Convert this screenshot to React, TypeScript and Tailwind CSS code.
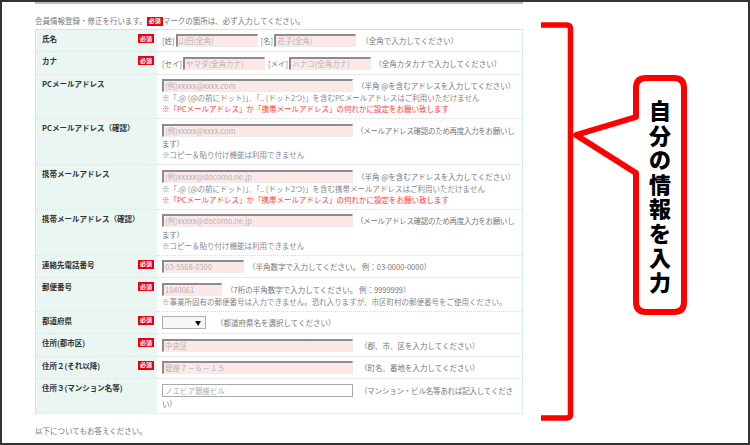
import React from 'react';

const font = "font-['Noto_Sans_CJK_JP','Noto_Sans',sans-serif]";

const Badge = () => (
  <span className="inline-flex h-[9px] w-[16px] items-center justify-center bg-[#e60012] text-[6px] font-bold leading-none text-white">
    必須
  </span>
);

const Field = ({ w, ph }: { w: string; ph: string }) => (
  <span
    className={`inline-block h-[13px] ${w} overflow-hidden whitespace-nowrap border-b border-l-2 border-r border-t-2 border-b-[#ececec] border-l-[#8c8c8c] border-r-[#ececec] border-t-[#8c8c8c] bg-[#fde8e8] pl-[1px] align-middle text-[7.5px] leading-[10px] text-[#b3b3b3]`}
  >
    {ph}
  </span>
);

const Row = ({ label, req, children }: { label: string; req?: boolean; children: React.ReactNode }) => (
  <div className="grid grid-cols-[121px_1fr] border-b border-dotted border-[#bfe7dc]">
    <div className="flex items-start justify-between bg-[#e9f6f2] pl-[6px] pr-[3px] pt-[4px] text-[7.5px] font-bold leading-[10px] text-[#333]">
      <span>{label}</span>
      {req && <Badge />}
    </div>
    <div className="pb-[4px] pl-[5px] pr-[1px] pt-[4px] text-[7.5px] leading-[11px] text-[#777]">{children}</div>
  </div>
);

const Hint = ({ children, cls }: { children: React.ReactNode; cls: string }) => (
  <span className={`${cls} align-middle`}>{children}</span>
);

const Note = ({ children, red }: { children: React.ReactNode; red?: boolean }) => (
  <div className={red ? 'text-[#ff3b3b]' : 'text-[#888]'}>{children}</div>
);

export default function App() {
  return (
    <div className={`relative h-[445px] w-[750px] overflow-hidden border-2 border-[#333] bg-white ${font}`}>
      <div className="flex h-full">
        <div className="ml-[33px] w-[488px]">
          <div className="h-[2px] bg-[#bdbdbd]" />
          <div className="mt-[12px] flex items-center text-[7.5px] leading-[10px] text-[#777]">
            会員情報登録・修正を行います。
            <Badge />
            マークの箇所は、必ず入力してください。
          </div>

          <div className="mt-[3px] border-l border-r border-t border-[#c9ece2] border-r-[#d3efe7]">
            <Row label="氏名" req>
              <span className="mr-[1px] align-middle">[姓]</span>
              <Field w="w-[82px]" ph="山田(全角)" />
              <span className="ml-[3px] mr-[1px] align-middle">[名]</span>
              <Field w="w-[82px]" ph="花子(全角)" />
              <Hint cls="ml-[5px]">（全角で入力してください）</Hint>
            </Row>
            <Row label="カナ" req>
              <span className="mr-[1px] align-middle">[セイ]</span>
              <Field w="w-[82px]" ph="ヤマダ(全角カナ)" />
              <span className="ml-[3px] mr-[1px] align-middle">[メイ]</span>
              <Field w="w-[82px]" ph="ハナコ(全角カナ)" />
              <Hint cls="ml-[3px]">（全角カタカナで入力してください）</Hint>
            </Row>
            <Row label="PCメールアドレス">
              <Field w="w-[191px]" ph="(例)xxxxx@xxxx.com" />
              <Hint cls="ml-[4px]">（半角 @を含むアドレスを入力してください）</Hint>
              <Note>※「.@ (@の前にドット)」、「.. (ドット2つ)」を含むPCメールアドレスはご利用いただけません</Note>
              <Note red>※「PCメールアドレス」か「携帯メールアドレス」の何れかに設定をお願い致します</Note>
            </Row>
            <Row label="PCメールアドレス（確認）">
              <Field w="w-[191px]" ph="(例)xxxxx@xxxx.com" />
              <Hint cls="ml-[3px] tracking-[-0.3px]">
                （メールアドレス確認のため再度入力をお願いし
                <br />
                ます）
              </Hint>
              <Note>※コピー＆貼り付け機能は利用できません</Note>
            </Row>
            <Row label="携帯メールアドレス">
              <Field w="w-[191px]" ph="(例)xxxxx@docomo.ne.jp" />
              <Hint cls="ml-[4px]">（半角 @を含むアドレスを入力してください）</Hint>
              <Note>※「.@ (@の前にドット)」、「.. (ドット2つ)」を含む携帯メールアドレスはご利用いただけません</Note>
              <Note red>※「PCメールアドレス」か「携帯メールアドレス」の何れかに設定をお願い致します</Note>
            </Row>
            <Row label="携帯メールアドレス（確認）">
              <Field w="w-[191px]" ph="(例)xxxxx@docomo.ne.jp" />
              <Hint cls="ml-[3px] tracking-[-0.3px]">
                （メールアドレス確認のため再度入力をお願いし
                <br />
                ます）
              </Hint>
              <Note>※コピー＆貼り付け機能は利用できません</Note>
            </Row>
            <Row label="連絡先電話番号" req>
              <Field w="w-[82px]" ph="03-5568-0300" />
              <Hint cls="ml-[4px]">（半角数字で入力してください。 例：03-0000-0000）</Hint>
            </Row>
            <Row label="郵便番号" req>
              <Field w="w-[60px]" ph="1040061" />
              <Hint cls="ml-[4px]">（7桁の半角数字で入力してください。 例：9999999）</Hint>
              <Note>※事業所固有の郵便番号は入力できません。恐れ入りますが、市区町村の郵便番号をご使用ください。</Note>
            </Row>
            <Row label="都道府県" req>
              <span className="inline-flex h-[13px] w-[44px] items-center justify-end border border-[#b0b0b0] bg-[#f6f6f6] pr-[4px] align-middle text-[6px] text-black">
                ▼
              </span>
              <Hint cls="ml-[10px]">（都道府県名を選択してください）</Hint>
            </Row>
            <Row label="住所(都市区)" req>
              <Field w="w-[191px]" ph="中央区" />
              <Hint cls="ml-[7px]">（郡、市、区を入力してください）</Hint>
            </Row>
            <Row label="住所２(それ以降)" req>
              <Field w="w-[191px]" ph="銀座７－６－１５" />
              <Hint cls="ml-[7px]">（町名、番地を入力してください）</Hint>
            </Row>
            <Row label="住所３(マンション名等)">
              <span className="inline-block h-[13px] w-[191px] border border-[#a8a8a8] bg-white pl-[2px] align-middle text-[7.5px] leading-[11px] text-[#aaa]">
                ノエビア銀座ビル
              </span>
              <Hint cls="ml-[7px] tracking-[-0.2px]">
                （マンション・ビル名等あれば記入してくださ
                <br />
                い）
              </Hint>
            </Row>
          </div>

          <div className="mt-[12px] text-[7.5px] leading-[10px] text-[#777]">以下についてもお答えください。</div>
          <div className="mt-[10px] h-[10px] border-l border-t border-[#c9ece2] bg-[#e9f6f2]" />
        </div>

        <div className="relative flex-1">
          <svg className="absolute inset-0" width="225" height="441" viewBox="0 0 225 441">
            <path
              d="M18 23 H44 Q47.5 23 47.5 27 V412 Q47.5 416 44 416 H18"
              fill="none"
              stroke="#ff0000"
              strokeWidth="5.5"
            />
            <path
              d="M123 76 H151 Q161 76 161 86 V300 Q161 310 151 310 H123 Q113 310 113 300 V171 L53 133 L113 115 V86 Q113 76 123 76 Z"
              fill="#ffffff"
              stroke="#ff0000"
              strokeWidth="6"
              strokeLinejoin="round"
            />
          </svg>
          <div className="absolute left-[125px] top-[95px] flex w-[24px] flex-col items-center text-[22px] font-black leading-[24.5px] text-black">
            {'自分の情報を入力'.split('').map((c, i) => (
              <span key={i}>{c}</span>
            ))}
          </div>
        </div>
      </div>
    </div>
  );
}
